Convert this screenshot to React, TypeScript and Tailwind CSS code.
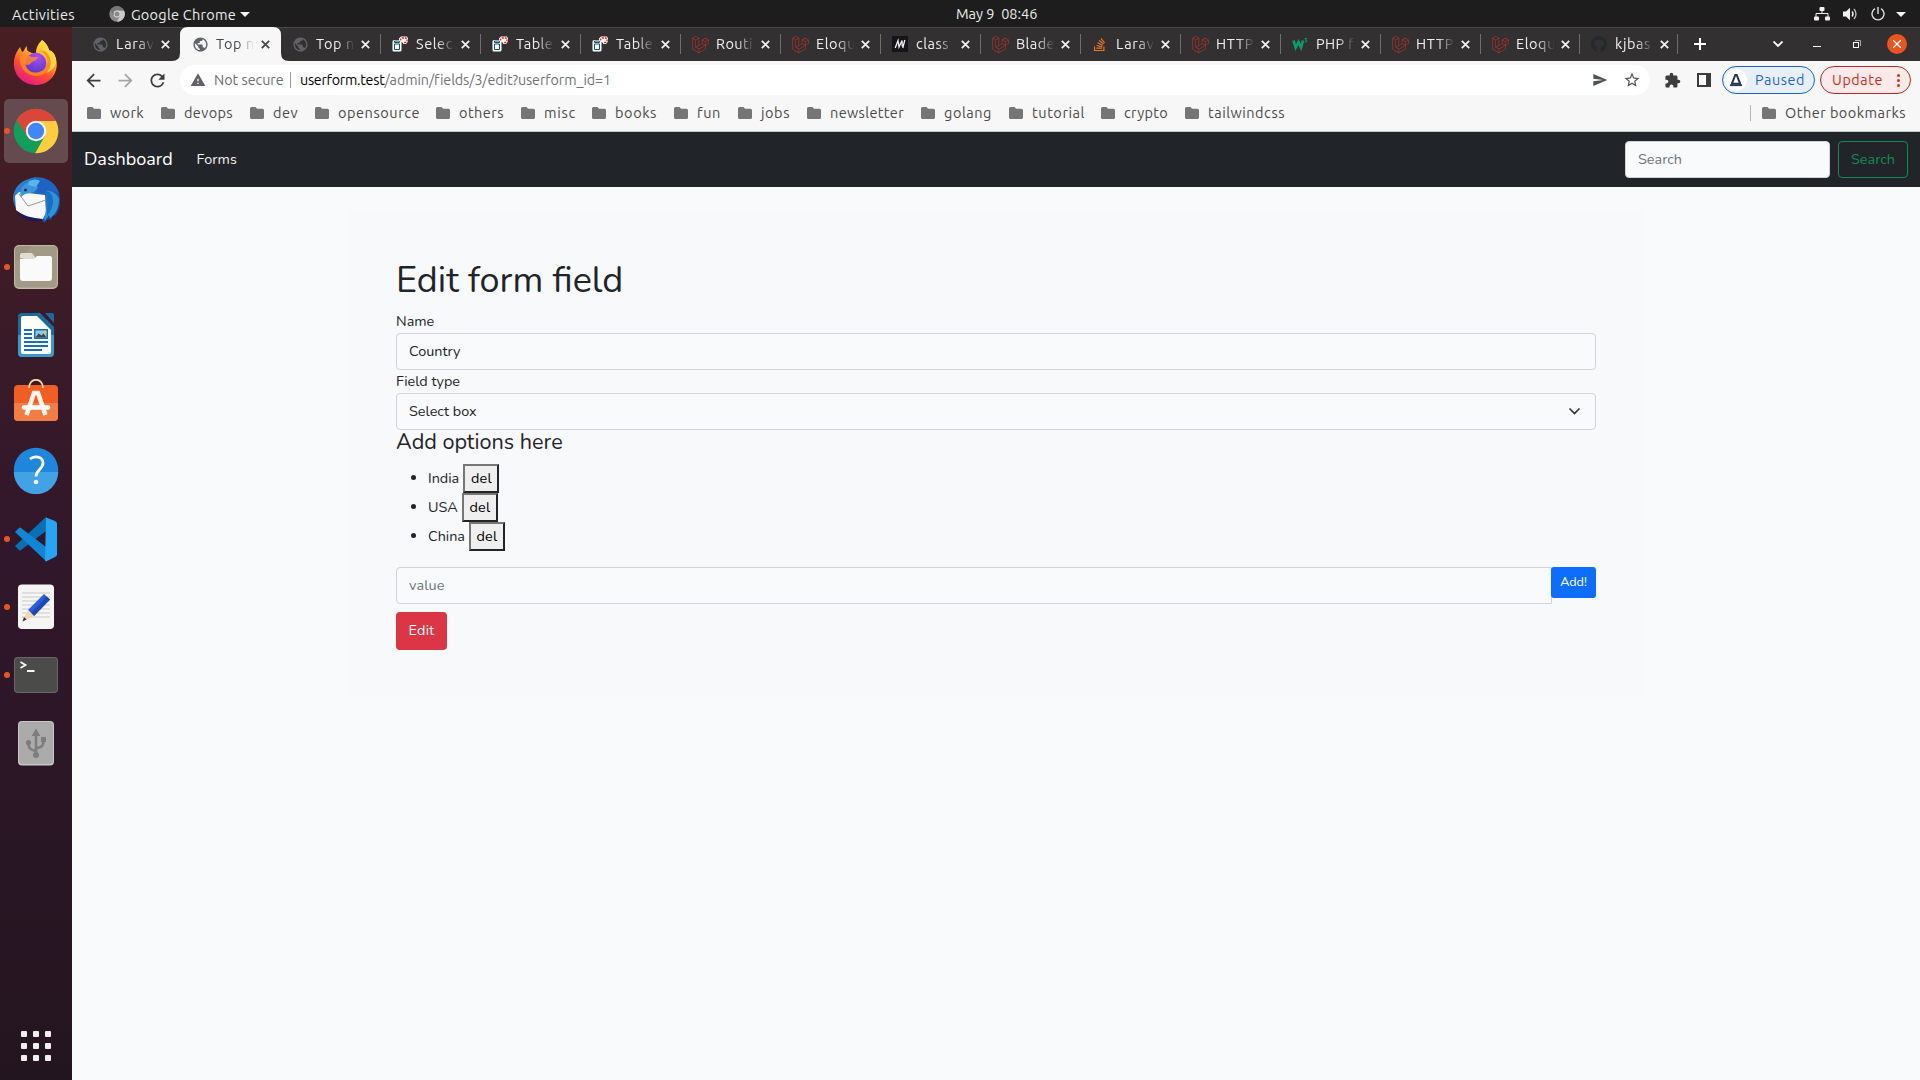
import { useLayoutEffect, useRef, type ReactNode } from "react";
import {
  MdArrowBack,
  MdArrowForward,
  MdExtension,
  MdPublic,
  MdRefresh,
  MdSend,
  MdStarBorder,
  MdWarning,
} from "react-icons/md";
import { FaGithub, FaLaravel, FaStackOverflow } from "react-icons/fa";

const UI = "font-['Ubuntu','Noto_Sans',sans-serif]";
const BODY = "font-['Nunito','Lato',sans-serif]";

/* Text run whose tracking is adjusted so that it fills `w` pixels. */
function Fit({ w, className = "", children }: { w: number; className?: string; children: string }) {
  const ref = useRef<HTMLSpanElement>(null);
  useLayoutEffect(() => {
    const el = ref.current;
    if (!el) return;
    el.style.letterSpacing = "0px";
    const range = document.createRange();
    range.selectNodeContents(el);
    const natural = range.getBoundingClientRect().width;
    const gap = (w - natural) / children.length;
    el.style.letterSpacing = Math.abs(gap) < 0.08 ? "normal" : `${gap}px`;
  }, [w, children]);
  return (
    <span ref={ref} className={`inline-block shrink-0 whitespace-pre ${className}`} style={{ width: w }}>
      {children}
    </span>
  );
}

/* ---------- top bar ---------- */

function TopBar() {
  return (
    <div className="grid h-[27px] shrink-0 grid-cols-3 items-center bg-[#1d1d1d] text-[14.5px] leading-[27px] text-[#ececec]">
      <div className="flex items-center pl-3">
        <Fit w={63}>Activities</Fit>
        <svg className="ml-[34px] mr-[6px] shrink-0" width="16" height="16" viewBox="0 0 16 16">
          <circle cx="8" cy="8" r="7.7" fill="#8b8b8b" />
          <path d="M8 4.4h7A7.7 7.7 0 0 1 8 15.7l3-6z" fill="#c9c9c9" />
          <path d="M1.3 4.2A7.7 7.7 0 0 1 15 4.6H8L5 9.8z" fill="#777" />
          <circle cx="8" cy="8" r="3.4" fill="#ddd" />
          <circle cx="8" cy="8" r="2.5" fill="#8a8a8a" />
        </svg>
        <Fit w={105}>Google Chrome</Fit>
        <svg className="ml-[4px]" width="10" height="5" viewBox="0 0 10 5">
          <path d="M0 0h10L5 5z" fill="#f2f2f2" />
        </svg>
      </div>
      <div className="flex justify-center pb-px pl-[74px]">
        <Fit w={82}>{"May 9  08:46"}</Fit>
      </div>
      <div className="flex items-center justify-end pb-px pr-[14px]">
        <svg width="16" height="14" viewBox="0 0 16 14" fill="#f2f2f2">
          <rect x="5.5" y="0" width="5" height="4" rx="1" />
          <rect x="0" y="9.5" width="5" height="4" rx="1" />
          <rect x="11" y="9.5" width="5" height="4" rx="1" />
          <path d="M2 10V6.5h12V10M8 3v4" fill="none" stroke="#f2f2f2" />
        </svg>
        <svg className="ml-[13px]" width="16" height="14" viewBox="0 0 16 14" fill="none">
          <path d="M0 4.5h3L7 .8v12.4L3 9.500H0z" fill="#f2f2f2" />
          <path d="M9 4.500q2 2.500 0 5" stroke="#f2f2f2" strokeWidth="1.4" />
          <path d="M11 2q4 5 0 10" stroke="#bbb" strokeWidth="1.3" />
        </svg>
        <svg className="ml-[12px]" width="14" height="14" viewBox="0 0 14 14" fill="none" stroke="#dedede" strokeWidth="1.4">
          <path d="M4 1.700a6 6 0 1 0 6 0M7 0v7" />
        </svg>
        <svg className="ml-[11px] mt-px" width="10" height="5" viewBox="0 0 10 5">
          <path d="M0 0h10L5 5z" fill="#f2f2f2" />
        </svg>
      </div>
    </div>
  );
}

/* ---------- dock ---------- */

const FirefoxIcon = () => (
  <svg width="48" height="48" viewBox="0 0 48 48">
    <defs>
      <linearGradient id="ff" x1=".8" y1="0" x2=".3" y2="1">
        <stop offset="0" stopColor="#fff04a" />
        <stop offset=".35" stopColor="#ffb52e" />
        <stop offset=".65" stopColor="#ff4f2e" />
        <stop offset="1" stopColor="#e3178a" />
      </linearGradient>
      <radialGradient id="ffp" cx=".6" cy=".2" r=".8">
        <stop offset="0" stopColor="#a84dff" />
        <stop offset="1" stopColor="#5a3ac2" />
      </radialGradient>
    </defs>
    <path
      d="M30 1c4 3 6 6 7 10 3 1 5 3 6 6 6 14-4 29-19 29C10 46 1 35 2 23c0-5 2-9 4-12l2-3 2 5c3-1 2-4 5-6-1 5 2 6 5 7h4c0-6 3-10 6-13z"
      fill="url(#ff)"
    />
    <circle cx="24" cy="24" r="10.2" fill="url(#ffp)" />
    <path d="M8 18c4-3 8-2 12 0h6c-1 4-5 4-7 6-2 3-5 1-6 2 2 6 8 9 14 7 7-2 10-7 8-14-1-3-4-6-7-7 3-1 8 1 10 6 3 9-3 18-13 19-11 0-18-9-17-19z" fill="#ff8a26" opacity=".85" />
    <path d="M30 1c-2 6 4 11 7 16 4 7 1 14-3 17 8-3 12-10 9-17-1-3-3-5-6-6-1-4-3-7-7-10z" fill="#ffd83c" />
  </svg>
);

const ChromeIcon = () => (
  <svg width="48" height="48" viewBox="0 0 48 48">
    <circle cx="24" cy="24" r="22.3" fill="#129e5a" />
    <path d="M4.700 12.900A22.300 22.300 0 0 1 43.300 12.900L43.900 14H24L15.200 29.100z" fill="#dc4539" />
    <path d="M24 13.900h19.900A22.300 22.300 0 0 1 24 46.300l-.8 0L32.800 29z" fill="#ffcd40" />
    <path d="M5.300 12 15.200 29.100 24 24V13.900h-11z" fill="#dc4539" />
    <circle cx="24" cy="24" r="10.2" fill="#f3f3f3" />
    <circle cx="24" cy="24" r="8.2" fill="#4285f4" />
  </svg>
);

const ThunderbirdIcon = () => (
  <svg className="translate-y-px" width="48" height="48" viewBox="0 0 48 48">
    <defs>
      <linearGradient id="tb" x1="0" y1="0" x2="1" y2="1">
        <stop offset="0" stopColor="#2d8fdb" />
        <stop offset="1" stopColor="#153a94" />
      </linearGradient>
    </defs>
    <path d="M1 22C2 11 9 5 17 3 24-1 42 1 47 17c2 9 1 17-4 23l-2-1-2 5-3-1-4 4-2-3C14 44 2 37 1 22z" fill="url(#tb)" />
    <path d="M4 34c5 8 14 12 25 11l4-6C20 40 12 39 4 34z" fill="#1d1660" />
    <path d="M18 4c12-5 26 1 29 14-6-5-12-4-17 0l-16-8z" fill="#1f62c4" />
    <path d="M3 20 7 16l26 3 1 18-3 6C20 42 11 40 4 34z" fill="#f8f8f8" />
    <path d="m7 18 9 12 18-6" fill="none" stroke="#999" />
    <path d="M9 21c-2-5 0-12 8-15l9 5c-2 6-9 6-13 7z" fill="#3d96dd" />
    <path d="M17 5c4-2 8-2 11 0l-4 6-8-2z" fill="#5ab4ec" />
    <circle cx="13.500" cy="14" r="1.500" fill="#1a2c55" />
    <path d="M34 15c6-1 11 3 13 8 0 10-4 16-9 19l-1-3-4 6-1-3c3-8 3-17 2-27z" fill="#2d93d8" />
    <path d="M34 15c5 1 7 5 7 10s-2 10-6 15c0-8 1-17-1-25z" fill="#1c6cbf" />
  </svg>
);

const FilesIcon = () => (
  <svg width="48" height="48" viewBox="0 0 48 48">
    <rect x="2" y="2" width="44" height="44" rx="5" fill="#c2b9a7" />
    <rect x="3" y="3" width="42" height="41.500" rx="4" fill="#9b917f" />
    <path d="M3 44V20L20 3h21a4 4 0 0 1 4 4v37z" fill="#aaa18f" opacity=".5" />
    <path d="M8 15v-3q0-2 2-2h10l3 4v4z" fill="#e2dccd" />
    <path d="M8 16h14l3-3h13q2 0 2 2v20q0 3-3 3H11q-3 0-3-3z" fill="#fafafa" />
  </svg>
);

const WriterIcon = () => (
  <svg width="48" height="48" viewBox="0 0 48 48">
    <path d="M10 2h18l14 14v26q0 4-4 4H10q-4 0-4-4V6q0-4 4-4z" fill="#1a6ba0" />
    <path d="M6 24h36v18q0 4-4 4H10q-4 0-4-4z" fill="#3a9ac9" />
    <path d="M11 5h14l14 14v22q0 2-2 2H11q-2 0-2-2V7q0-2 2-2z" fill="#fff" />
    <path d="M33 2h7q2 0 2 2v8z" fill="#1a6ba0" />
    <path d="M12 19h8M12 23h8M12 27h8M12 31h24M12 35h24M12 39h18" stroke="#1672aa" strokeWidth="2" />
    <rect x="22" y="18" width="14" height="10" fill="#1672aa" />
    <rect x="23.500" y="19.500" width="11" height="7" fill="#8ac9ee" />
    <path d="m23.500 26.500 3-4 3 2 2-2 3 4z" fill="#444" />
    <circle cx="33" cy="21" r="1.500" fill="#f6c62d" />
  </svg>
);

const SoftwareIcon = () => (
  <svg width="48" height="48" viewBox="0 0 48 48">
    <rect x="2" y="6" width="44" height="36" rx="4" fill="#f05d25" />
    <path d="M2 24h44v14q0 4-4 4H6q-4 0-4-4z" fill="#f27c45" />
    <path d="M17 9C17-2 31-2 31 9" fill="none" stroke="#f6d3a4" strokeWidth="1.800" />
    <path d="M14.500 36 22 14h4l7.500 22" fill="none" stroke="#fff3ea" strokeWidth="4.600" />
    <path d="M12 28.500h24" stroke="#fff" strokeWidth="4.500" strokeLinecap="round" />
  </svg>
);

const HelpIcon = () => (
  <svg className="-translate-y-px" width="48" height="48" viewBox="0 0 48 48">
    <circle cx="24" cy="24" r="22.200" fill="#1f86dd" />
    <path d="M1.800 26h44.400a22.200 22.200 0 0 1-44.400 0z" fill="#42a2e6" />
    <path d="M18 13c4-3.500 13-3 13 4 0 6-7 7-7 13.500" fill="none" stroke="#fff" strokeWidth="2.800" />
    <circle cx="24" cy="36" r="2.300" fill="#fff" />
  </svg>
);

const CodeIcon = () => (
  <svg width="48" height="48" viewBox="0 0 48 48">
    <path d="M34 2 3 31l4 4q1 1 2 0l25-19z" fill="#0a6fb5" />
    <path d="M34 46 3 17l4-4q1-1 2 0l25 19z" fill="#1187d3" />
    <path d="M34 2.500 43 6q2 1 2 2.500v31q0 1.500-2 2.500l-9 4.500-1-1z" fill="#27a4f2" />
  </svg>
);

const EditorIcon = () => (
  <svg width="48" height="48" viewBox="0 0 48 48">
    <rect x="6" y="1.500" width="36" height="44.500" rx="4" fill="#f5f5f4" />
    <path d="M10 10h28M10 14h28M10 18h28M10 22h28M10 26h28M10 30h28M10 34h28" stroke="#c9c9c9" />
    <path d="m32 11 6 5.500L22 33l-6-6z" fill="#2b5fd9" />
    <path d="m34.500 13.500 3.500 3L22 33l-3-3z" fill="#1d47b5" />
    <path d="m16 27 6 6-11.500 5.500z" fill="#f8d5ad" />
    <path d="m12 34 2.500 2.500-4 2z" fill="#333" />
  </svg>
);

const TerminalIcon = () => (
  <svg width="48" height="48" viewBox="0 0 48 48">
    <rect x="2" y="6" width="44" height="36" rx="4" fill="#686866" />
    <rect x="3" y="7" width="42" height="34" rx="3" fill="#4b4b49" />
    <path d="m8.500 11 5 3-5 3M15 20h7.500" fill="none" stroke="#f7f7f7" strokeWidth="1.800" />
  </svg>
);

const UsbIcon = () => (
  <svg width="48" height="48" viewBox="0 0 48 48">
    <rect x="6" y="2" width="36" height="44.500" rx="4" fill="#c8c8c8" />
    <rect x="7" y="3" width="34" height="42" rx="3" fill="#ababab" />
    <g fill="none" stroke="#7d7d7d" strokeWidth="2.600">
      <path d="M24 36V14M24 32c-6-1-7.500-3-7.500-8M24 29.500c6-1 7.500-2.500 7.500-8" />
    </g>
    <path d="m24 9.500 4.300 7.500h-8.600z" fill="#7d7d7d" />
    <circle cx="24" cy="36" r="3" fill="#7d7d7d" />
    <circle cx="16.500" cy="23.500" r="2.600" fill="#7d7d7d" />
    <rect x="29" y="18" width="5" height="5" fill="#7d7d7d" />
  </svg>
);

const DOCK: { icon: ReactNode; running?: boolean; active?: boolean }[] = [
  { icon: <FirefoxIcon /> },
  { icon: <ChromeIcon />, running: true, active: true },
  { icon: <ThunderbirdIcon /> },
  { icon: <FilesIcon />, running: true },
  { icon: <WriterIcon /> },
  { icon: <SoftwareIcon /> },
  { icon: <HelpIcon /> },
  { icon: <CodeIcon />, running: true },
  { icon: <EditorIcon />, running: true },
  { icon: <TerminalIcon />, running: true },
  { icon: <UsbIcon /> },
];

function Dock() {
  return (
    <aside className="flex w-[72px] shrink-0 flex-col bg-linear-to-b from-[#481f22] via-[#31172b] to-[#23151f] pt-[2px]">
      {DOCK.map((d, i) => (
        <div key={i} className="relative flex h-[68px] shrink-0 items-center justify-center">
          <div
            className={
              d.active
                ? "flex size-16 items-center justify-center rounded-[5px] bg-[#654a4f]"
                : "flex size-16 items-center justify-center"
            }
          >
            {d.icon}
          </div>
          {d.running && <span className="absolute left-1 top-[31px] size-[6px] rounded-full bg-[#e95420]" />}
        </div>
      ))}
      <div className="mb-[19px] mt-auto grid grid-cols-3 gap-[6px] self-center">
        {Array.from({ length: 9 }, (_, i) => (
          <span key={i} className="size-[6px] rounded-[1px] bg-[#f2f0ec]" />
        ))}
      </div>
    </aside>
  );
}

/* ---------- browser ---------- */

const DbIcon = () => (
  <svg width="16" height="16" viewBox="0 0 16 16">
    <rect x=".5" y="4" width="9" height="11.500" rx="1.500" fill="#fff" />
    <path d="M2.500 5h5v1.500h-5zM2.500 8h5v5.500h-5z" fill="#fff" stroke="#0b5563" />
    <path d="M7 5V2.500L9 .500h6l1 2v3L14 8h-2.500L10 6z" fill="#fff" />
    <path d="M8.500 4.500v-1L10 2h4l1 1v2l-1.500 1.500H12" fill="none" stroke="#ed1c24" strokeWidth="1.400" strokeDasharray="2 1" />
  </svg>
);

const MIcon = () => (
  <svg width="16" height="16" viewBox="0 0 16 16">
    <rect width="16" height="16" fill="#15141a" />
    <path d="M3.200 12 6 4.500 7 11l3-6.500.300 6M12.800 4 10.800 12" fill="none" stroke="#f2f2f2" strokeWidth="1.300" />
  </svg>
);

const W3Icon = () => (
  <svg width="16" height="16" viewBox="0 0 16 16" fill="none">
    <path d="m1.500 4.500 2.200 7L6.500 6l2.500 5.500 2-7" stroke="#0b9d67" strokeWidth="2.600" />
    <path d="M12.500 2.500h2.200L13.500 4.200q1.800 0 1.200 1.500-.8.800-2 .2" stroke="#0b9d67" />
  </svg>
);

const lara = <FaLaravel size={17} color="#c4302a" />;
const globe = <MdPublic size={17} color="#5f6368" />;

const TABS: { t: string; w: number; icon: ReactNode }[] = [
  { t: "Larav", w: 38.5, icon: globe },
  { t: "Top n", w: 39, icon: globe },
  { t: "Top n", w: 39, icon: globe },
  { t: "Selec", w: 37, icon: <DbIcon /> },
  { t: "Table", w: 37, icon: <DbIcon /> },
  { t: "Table", w: 37, icon: <DbIcon /> },
  { t: "Routi", w: 37, icon: lara },
  { t: "Eloqu", w: 40, icon: lara },
  { t: "class ", w: 37, icon: <MIcon /> },
  { t: "Blade", w: 39, icon: lara },
  { t: "Larav", w: 38.5, icon: <FaStackOverflow size={15} color="#e87722" /> },
  { t: "HTTP", w: 38, icon: lara },
  { t: "PHP f", w: 38, icon: <W3Icon /> },
  { t: "HTTP", w: 38, icon: lara },
  { t: "Eloqu", w: 40, icon: lara },
  { t: "kjbas", w: 36, icon: <FaGithub size={16} color="#24292e" /> },
];

function TabStrip() {
  return (
    <div className="flex h-[34px] shrink-0 border-t border-[#4a4748] bg-[#333031] pl-2">
      {TABS.map((tab, i) => {
        const active = i === 1;
        return (
          <div
            key={i}
            className={`relative flex h-[33px] shrink-0 items-center pb-px pl-3 ${i >= 14 ? "w-[99px]" : "w-[100px]"} ${
              active ? "text-[#45474a]" : "text-[#f0f0f0]"
            }`}
          >
            {active && (
              <svg className="absolute -left-2 -top-px" width="118" height="34" viewBox="0 0 118 34">
                <path d="M0 34q8 0 8-8V8q0-8 8-8h85q8 0 8 8v18q0 8 8 8z" fill="#f7f7f7" />
              </svg>
            )}
            {i > 2 && <span className="absolute left-0 top-[6px] h-5 w-px bg-[#716e6f]" />}
            <span className="relative flex w-6 shrink-0 items-center">{tab.icon}</span>
            <span className="relative w-[41px] mask-r-from-52% mask-r-to-94% text-[14.500px] leading-[32px]">
              <Fit w={tab.w}>{tab.t}</Fit>
            </span>
            <svg
              className="relative ml-[4px] shrink-0"
              width="9"
              height="9"
              viewBox="0 0 9 9"
              stroke="currentColor"
              strokeWidth="1.800"
            >
              <path d="m.800.800 7.400 7.400M8.200.800.800 8.200" />
            </svg>
          </div>
        );
      })}
      <div className="flex w-[243px] shrink-0 items-center pb-px text-white">
        <span className="h-5 w-px -translate-x-px bg-[#716e6f]" />
        <svg className="ml-[15px]" width="12" height="12" viewBox="0 0 12 12" stroke="#fff" strokeWidth="2">
          <path d="M6 0v12M0 6h12" />
        </svg>
        <svg className="ml-[67px]" width="10" height="6" viewBox="0 0 10 6" fill="none" stroke="#fff" strokeWidth="1.800">
          <path d="m.500.500 4.500 4.500L9.500.500" />
        </svg>
        <span className="ml-[30px] mt-[5px] h-px w-2 bg-white" />
        <svg className="ml-8" width="8" height="8" viewBox="0 0 8 8" fill="none">
          <path d="M2 .500h5.500V6" stroke="#aaa" />
          <rect x=".500" y="2.500" width="5" height="5" stroke="#fff" />
        </svg>
        <span className="ml-[26px] flex size-5 shrink-0 items-center justify-center rounded-full bg-[#e95420]">
          <svg width="8" height="8" viewBox="0 0 8 8" stroke="#fff" strokeWidth="1.300">
            <path d="m0 0 8 8M8 0 0 8" />
          </svg>
        </span>
      </div>
    </div>
  );
}

function Toolbar() {
  return (
    <div className="flex h-[38px] shrink-0 items-center bg-[#f7f7f7] pl-[5px] text-[14.300px]">
      <MdArrowBack size={21} color="#3c3c3c" className="ml-[6px]" />
      <MdArrowForward size={21} color="#a5a5a5" className="ml-[11px]" />
      <MdRefresh size={21} color="#3c3c3c" className="ml-[11px]" />
      <div className="ml-[12px] flex h-[30px] w-[1470px] shrink-0 items-center rounded-full bg-white pl-[10px]">
        <MdWarning size={16} color="#5f6368" />
        <Fit w={69} className="ml-[8px] pt-px text-[#6b6e72]">Not secure</Fit>
        <span className="ml-[7px] h-4 w-px bg-[#9a9a9a]" />
        <Fit w={84.500} className="ml-[9px] pt-px text-black">userform.test</Fit>
        <Fit w={226} className="pt-px text-[#707377]">/admin/fields/3/edit?userform_id=1</Fit>
        <MdSend size={16} color="#505356" className="ml-auto" />
        <MdStarBorder size={18} color="#505356" className="ml-[15px] mr-[9px]" />
      </div>
      <MdExtension size={17} color="#3c3c3c" className="ml-[14px]" />
      <svg className="ml-[16px] shrink-0" width="14" height="14" viewBox="0 0 14 14">
        <rect width="14" height="14" fill="#3c3c3c" />
        <rect x="2" y="2" width="7" height="10" fill="#fff" />
      </svg>
      <div className="ml-[11px] flex h-7 w-[93px] shrink-0 items-center rounded-full border border-[#1a63d0] bg-[#e9eff9] pl-[2px] text-[#1f66d2]">
        <span className="flex size-[22px] shrink-0 items-center justify-center rounded-full bg-white">
          <svg width="14" height="14" viewBox="0 0 14 14" fill="none">
            <path d="M2.800 10.800 6.300 2h1.400l3.500 8.800z" stroke="#24344f" strokeWidth="2" />
            <path d="M1 12.300h12" stroke="#24344f" strokeWidth="1.600" />
          </svg>
        </span>
        <Fit w={50} className="ml-2 pt-px">Paused</Fit>
      </div>
      <div className="ml-[5px] flex h-7 w-[91px] shrink-0 items-center rounded-full border border-[#c5221f] bg-[#fbeaea] pl-[11px] text-[#cd2a22]">
        <Fit w={51} className="pt-px">Update</Fit>
        <span className="ml-[14px] flex flex-col gap-[2px]">
          <span className="size-[3px] rounded-full bg-[#d93025]" />
          <span className="size-[3px] rounded-full bg-[#d93025]" />
          <span className="size-[3px] rounded-full bg-[#d93025]" />
        </span>
      </div>
    </div>
  );
}

const FolderIcon = () => (
  <svg className="shrink-0" width="14" height="12" viewBox="0 0 14 12">
    <path d="M1.500 0H5.500L7 1.700h5.500Q14 1.700 14 3.200v7.300Q14 12 12.500 12h-11Q0 12 0 10.500v-9Q0 0 1.500 0z" fill="#757575" />
  </svg>
);

/* label, label width, full cell width */
const BOOKMARKS: [string, number, number][] = [
  ["work", 34, 74],
  ["devops", 49, 89],
  ["dev", 25, 65],
  ["opensource", 82, 121],
  ["others", 45, 85],
  ["misc", 32, 71],
  ["books", 42, 82],
  ["fun", 24, 64],
  ["jobs", 29, 69],
  ["newsletter", 74, 114],
  ["golang", 48, 88],
  ["tutorial", 53, 92],
  ["crypto", 44, 84],
  ["tailwindcss", 77, 120],
];

function BookmarksBar() {
  return (
    <div className="flex h-[33px] shrink-0 items-center border-b border-[#bccac9] bg-[#f7f7f7] pb-[5px] pl-[15px] text-[14.500px] leading-7 text-[#4a4a4a]">
      {BOOKMARKS.map(([label, w, cell]) => (
        <div key={label} className="flex shrink-0 items-center gap-[9px]" style={{ width: cell }}>
          <FolderIcon />
          <Fit w={w}>{label}</Fit>
        </div>
      ))}
      <div className="ml-auto flex items-center pr-[14px]">
        <span className="mr-[11px] h-4 w-px bg-[#b5b5b5]" />
        <FolderIcon />
        <Fit w={121} className="ml-[9px]">Other bookmarks</Fit>
      </div>
    </div>
  );
}

/* ---------- page ---------- */

function Navbar() {
  return (
    <nav className="flex h-[55px] shrink-0 items-center bg-[#212529] pl-3 pr-3">
      <Fit w={88.500} className="-mt-[2px] text-[18px] leading-6 text-white">Dashboard</Fit>
      <Fit w={40.500} className="ml-6 text-[14.400px] text-[#f3f3f4]">Forms</Fit>
      <div className="ml-auto flex h-[37px] w-[205px] items-center rounded-[4px] border border-[#ced4da] bg-[#f8fafc] pl-3 text-[14.400px] text-[#6c757d]">
        <Fit w={44}>Search</Fit>
      </div>
      <button className="ml-2 flex h-[37px] w-[70px] items-center rounded-[4px] border border-[#198754] pl-3 text-[14.400px] text-[#198754]">
        <Fit w={44}>Search</Fit>
      </button>
    </nav>
  );
}

/* option label, label width */
const OPTIONS: [string, number][] = [
  ["India", 31.500],
  ["USA", 30],
  ["China", 37],
];

function EditForm() {
  return (
    <form className="mx-auto mt-6 h-[486px] w-[1296px] bg-[#f8f9fb] p-12 text-[14.400px] leading-[23px] text-[#212529]">
      <h1 className="h-[51px] text-[36px] leading-[43px]">
        <Fit w={227}>Edit form field</Fit>
      </h1>
      <div className="h-[23px]">
        <Fit w={38.500}>Name</Fit>
      </div>
      <div className="flex h-[37px] items-center rounded-[4px] border border-[#ced4da] bg-[#f8fafc] pl-3">
        <Fit w={51.500}>Country</Fit>
      </div>
      <div className="h-[23px]">
        <Fit w={64}>Field type</Fit>
      </div>
      <div className="flex h-[37px] items-center justify-between rounded-[4px] border border-[#ced4da] bg-[#f8fafc] pl-3 pr-[15px]">
        <Fit w={67.500}>Select box</Fit>
        <svg width="11" height="7" viewBox="0 0 11 7" fill="none" stroke="#343a40" strokeWidth="1.700" strokeLinecap="round">
          <path d="m1 1 4.500 4.500L10 1" />
        </svg>
      </div>
      <h4 className="h-[34px] text-[21.600px] leading-6">
        <Fit w={166.500}>Add options here</Fit>
      </h4>
      <ul className="mb-4">
        {OPTIONS.map(([name, w]) => (
          <li key={name} className="flex h-[29px] items-start">
            <span className="ml-[15px] mr-3 mt-[11px] size-[5px] rounded-full bg-[#212529]" />
            <Fit w={w} className="mr-[3.500px] mt-[3px] leading-[23px]">{name}</Fit>
            <button className="flex h-[29px] w-9 items-center justify-center border-2 border-b-[#212529] border-l-[#767676] border-r-[#212529] border-t-[#767676] bg-[#efefef] pl-px text-black">
              <Fit w={21}>del</Fit>
            </button>
          </li>
        ))}
      </ul>
      <div className="flex items-start">
        <div className="-mr-px flex h-[37px] w-[1156px] items-center rounded-l-[4px] border border-[#ced4da] bg-[#f8fafc] pl-3 text-[#6c757d]">
          <Fit w={35.500}>value</Fit>
        </div>
        <button className="relative flex h-[31px] w-[45px] items-center justify-center rounded-[3px] bg-[#0d6efd] pb-[3px] text-[12.600px] leading-[19px] text-white">
          <Fit w={27}>Add!</Fit>
        </button>
      </div>
      <button className="mt-2 flex h-[38px] w-[51px] items-center justify-center rounded-[4px] bg-[#dc3545] pb-px text-white">
        <Fit w={26}>Edit</Fit>
      </button>
    </form>
  );
}

export default function App() {
  return (
    <div className={`flex h-[1080px] w-[1920px] flex-col overflow-hidden ${UI}`}>
      <TopBar />
      <div className="flex min-h-0 flex-1">
        <Dock />
        <main className="flex min-w-0 flex-1 flex-col bg-[#f8fafc]">
          <TabStrip />
          <Toolbar />
          <BookmarksBar />
          <div className={`flex flex-1 flex-col ${BODY}`}>
            <Navbar />
            <EditForm />
          </div>
        </main>
      </div>
    </div>
  );
}
